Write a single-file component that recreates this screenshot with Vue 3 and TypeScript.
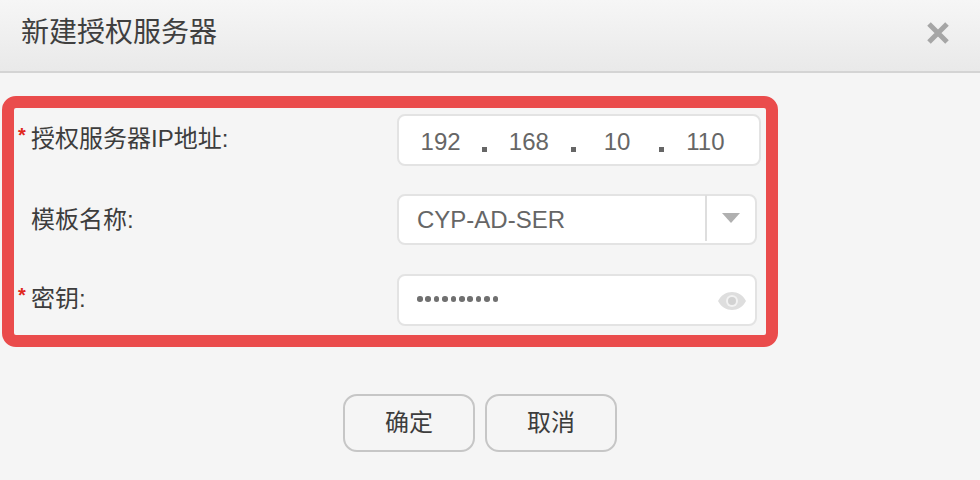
<script setup lang="ts">
const octets: string[] = ['192', '168', '10', '110']
</script>

<template>
  <div class="dialog">
    <header class="head">
      <h1 class="title">新建授权服务器</h1>
      <svg class="close" width="24" height="24" viewBox="0 0 24 24" aria-hidden="true">
        <path d="M3 3 L21 21 M21 3 L3 21" stroke="#a6a6a6" stroke-width="5" fill="none" />
      </svg>
    </header>

    <section class="box">
      <div class="row">
        <label class="label label-up"><span class="star">*</span>授权服务器IP地址:</label>
        <div class="field ip">
          <template v-for="(o, i) in octets" :key="o">
            <span class="octet">{{ o }}</span>
            <span v-if="i < octets.length - 1" class="dot"></span>
          </template>
        </div>
      </div>
      <div class="row">
        <label class="label"><span class="star star-empty"></span>模板名称:</label>
        <div class="field select">
          <span class="value">CYP-AD-SER</span>
          <span class="arrow-cell"><span class="arrow"></span></span>
        </div>
      </div>
      <div class="row">
        <label class="label label-up"><span class="star">*</span>密钥:</label>
        <div class="field pass">
          <span class="dots">
            <i v-for="n in 10" :key="n"></i>
          </span>
          <svg class="eye" width="30" height="20" viewBox="0 0 30 20" aria-hidden="true">
            <path d="M1 10 C7 -2 23 -2 29 10 C23 22 7 22 1 10 Z" fill="#dedede" />
            <circle cx="15" cy="10" r="6" fill="#f2f2f2" />
            <circle cx="15" cy="10" r="4" fill="#d2d2d2" />
          </svg>
        </div>
      </div>
    </section>

    <footer class="actions">
      <button class="btn" type="button">确定</button>
      <button class="btn" type="button">取消</button>
    </footer>
  </div>
</template>

<style scoped>
.dialog {
  width: 980px;
  height: 480px;
  overflow: hidden;
  background: #f5f5f5;
  font-family: "Liberation Sans", "Noto Sans CJK SC", sans-serif;
  color: #3d3d3d;
}
.head {
  box-sizing: border-box;
  height: 73px;
  display: flex;
  align-items: center;
  justify-content: space-between;
  padding: 0 30px 5px 21px;
  background: linear-gradient(#f6f6f6, #e9e9e9);
  border-bottom: 2px solid #d4d4d4;
}
.title {
  margin: 0;
  font-size: 28px;
  font-weight: 400;
  line-height: 36px;
  color: #3f3f3f;
}
.close {
  display: block;
}
.box {
  box-sizing: border-box;
  width: 776px;
  height: 251px;
  margin: 23px 0 0 2px;
  padding: 6px 0 0 14px;
  border: 12px solid #ea4c4c;
  border-radius: 14px;
  display: flex;
  flex-direction: column;
  gap: 28px;
}
.row {
  display: flex;
  align-items: flex-start;
  height: 52px;
}
.label {
  width: 379px;
  display: flex;
  align-items: center;
  height: 46px;
  font-size: 24px;
  color: #3d3d3d;
  margin-left: -10px;
}
.label-up {
  height: 44px;
}
.star {
  width: 13px;
  color: #e0281e;
  font-size: 20px;
  font-weight: 700;
  line-height: 1;
  margin-top: -3px;
}
.star-empty {
  height: 1px;
}
.field {
  box-sizing: border-box;
  height: 52px;
  background: #fff;
  border: 2px solid #e3e3e3;
  border-radius: 8px;
  display: flex;
  align-items: center;
  color: #666;
  font-size: 24px;
}
.ip {
  width: 364px;
  padding-right: 12px;
}
.octet {
  flex: 1;
  text-align: center;
  padding-top: 3px;
}
.dot {
  width: 5px;
  height: 5px;
  flex: none;
  background: #666;
  margin: 18px 0 0;
}
.select {
  width: 360px;
  height: 51px;
  padding-left: 18px;
}
.value {
  flex: 1;
}
.arrow-cell {
  width: 50px;
  height: 46px;
  margin-bottom: 3px;
  border-left: 2px solid #dedede;
  display: flex;
  align-items: center;
  justify-content: center;
  box-sizing: border-box;
}
.arrow {
  width: 0;
  height: 0;
  border-left: 9px solid transparent;
  border-right: 9px solid transparent;
  border-top: 10px solid #b0b0b0;
}
.pass {
  width: 360px;
  padding: 0 8px 0 18px;
  justify-content: space-between;
}
.dots {
  display: flex;
  gap: 2.8px;
  margin-bottom: 2px;
}
.dots i {
  display: block;
  width: 5.6px;
  height: 5.6px;
  border-radius: 50%;
  background: #707070;
}
.eye {
  display: block;
  margin-top: 1px;
}
.actions {
  display: flex;
  gap: 10px;
  margin: 47px 0 0 343px;
}
.btn {
  box-sizing: border-box;
  width: 132px;
  height: 58px;
  background: transparent;
  border: 2px solid #c6c6c6;
  border-radius: 14px;
  font-family: inherit;
  font-size: 24px;
  color: #3d3d3d;
  padding: 0 0 6px;
}
</style>
